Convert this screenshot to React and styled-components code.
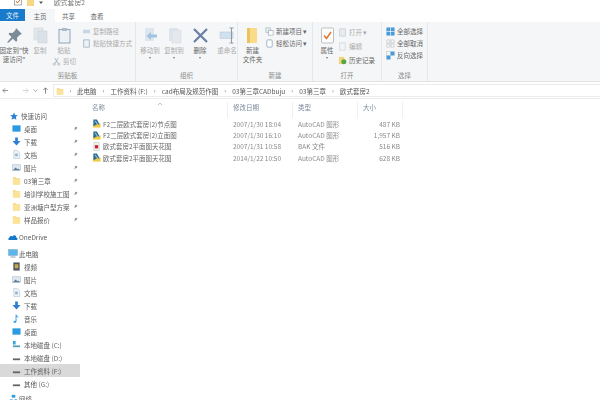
import React from 'react';
import styled, {createGlobalStyle} from 'styled-components';

const GlobalStyle = createGlobalStyle`
	html, body {
		margin: 0;
		padding: 0;
		background: #fff;
	}
	body {
		width: 600px;
		height: 400px;
		overflow: hidden;
		font-family: "Noto Sans CJK SC", "Noto Sans", sans-serif;
		font-size: 6.5px;
		color: #555;
	}
`;

const Win = styled.div`
	width: 600px;
	height: 400px;
	overflow: hidden;
	display: flex;
	flex-direction: column;
	filter: blur(0.4px);
`;

const TitleBar = styled.div`
	height: 9px;
	display: flex;
	align-items: flex-start;
	padding-left: 14px;
	gap: 5px;
	overflow: hidden;
	svg { flex: none; }
`;
const TitleText = styled.span`
	margin: -2px 0 0 6px;
	font-size: 6.8px;
	line-height: 9px;
	color: #777;
`;

const Tabs = styled.div`
	height: 13px;
	display: flex;
	align-items: stretch;
`;
const FileTab = styled.div`
	width: 25px;
	height: 12px;
	background: #1979ca;
	color: #e8f2fb;
	display: flex;
	align-items: center;
	justify-content: center;
`;
const Tab = styled.div`
	width: ${p => p.$w}px;
	background: ${p => (p.$active ? '#f5f6f7' : '#fff')};
	color: #666;
	display: flex;
	align-items: center;
	justify-content: center;
`;

const Ribbon = styled.div`
	height: 59px;
	background: #f5f6f7;
	border-bottom: 1px solid #e3e3e3;
	display: flex;
`;
const Group = styled.div`
	width: ${p => p.$w}px;
	flex: none;
	border-right: 1px solid #e6e7e8;
	display: flex;
	flex-direction: column;
	box-sizing: border-box;
`;
const GroupBody = styled.div`
	height: 49px;
	display: flex;
	padding-left: ${p => p.$pad || 0}px;
`;
const GroupLabel = styled.div`
	height: 10px;
	line-height: 9px;
	text-align: center;
	color: #8c8c8c;
`;
const BigButton = styled.div`
	width: ${p => p.$w}px;
	flex: none;
	display: flex;
	flex-direction: column;
	align-items: center;
	padding-top: 5px;
	line-height: 9px;
	text-align: center;
	white-space: nowrap;
	color: ${p => (p.$on ? '#666' : '#aaa')};
	svg { height: 17px; margin-bottom: 2px; }
`;
const Caret = styled.span`
	width: 0;
	height: 0;
	margin-top: 2px;
	border-left: 1.5px solid transparent;
	border-right: 1.5px solid transparent;
	border-top: 2px solid #777;
`;
const SmallColumn = styled.div`
	display: flex;
	flex-direction: column;
	padding-top: ${p => p.$top || 5}px;
	padding-left: ${p => p.$left || 0}px;
	gap: ${p => p.$gap || 3}px;
`;
const SmallButton = styled.div`
	height: 9px;
	display: flex;
	align-items: center;
	gap: 2px;
	white-space: nowrap;
	line-height: 9px;
	color: ${p => (p.$on ? '#666' : '#aaa')};
	svg { flex: none; height: 9px; margin: 0; }
`;
const Gap = styled.div`
	width: ${p => p.$w}px;
	flex: none;
`;
const CutRow = styled(SmallButton)`
	margin-top: 2px;
`;

const AddressRow = styled.div`
	height: 15px;
	margin-top: 1px;
	display: flex;
	align-items: center;
	border-bottom: 1px solid #ececec;
`;
const NavIcons = styled.div`
	width: 53px;
	flex: none;
	padding-left: 2px;
	box-sizing: border-box;
	display: flex;
	align-items: center;
	gap: 4px;
`;
const AddressBox = styled.div`
	flex: 1;
	height: 13px;
	border: 1px solid #ececec;
	border-right: none;
	box-sizing: border-box;
	display: flex;
	align-items: center;
	padding-left: 2px;
	color: #555;
	white-space: nowrap;
`;
const Chevron = styled.span`
	width: ${p => p.$w}px;
	flex: none;
	text-align: center;
	font-size: 6px;
	color: #777;
`;

const Main = styled.div`
	flex: 1;
	display: flex;
	min-height: 0;
`;
const Sidebar = styled.div`
	width: 80px;
	flex: none;
	padding-top: 10px;
	display: flex;
	flex-direction: column;
`;
const NavRow = styled.div`
	height: 13px;
	flex: none;
	display: flex;
	align-items: center;
	gap: ${p => p.$gap || 3}px;
	padding-left: ${p => p.$indent}px;
	margin-top: ${p => p.$space || 0}px;
	background: ${p => (p.$selected ? '#d9d9d9' : 'transparent')};
	white-space: nowrap;
	color: #5a5a5a;
	svg { flex: none; }
`;
const Pin = styled.span`
	position: absolute;
	left: 73px;
	color: #999;
	display: flex;
`;

const Content = styled.div`
	flex: 1;
	padding-top: 3px;
`;
const HeaderRow = styled.div`
	height: 16px;
	display: flex;
	padding-left: 7px;
	color: #7d8b9c;
`;
const ListRow = styled.div`
	height: 11.4px;
	display: flex;
	align-items: center;
	padding-left: 12px;
	color: #666;
	white-space: nowrap;
`;
const NameCell = styled.div`
	width: 136px;
	flex: none;
	display: flex;
	align-items: center;
	gap: 2px;
`;
const Cell = styled.div`
	width: ${p => p.$w}px;
	flex: none;
	box-sizing: border-box;
	padding-left: 5px;
	color: #8b8b8b;
	text-align: ${p => (p.$right ? 'right' : 'left')};
	padding-right: ${p => (p.$right ? 3 : 0)}px;
`;
const HeadCell = styled.div`
	width: ${p => p.$w}px;
	flex: none;
	box-sizing: border-box;
	padding-left: ${p => p.$pad ?? 5}px;
	height: 16px;
	line-height: 11px;
	border-right: 1px solid #efefef;
	position: relative;
`;
const SortMark = styled.svg`
	position: absolute;
	left: 70px;
	top: 0;
`;

const Folder = ({s = 9}) => (
	<svg width={s} height={s} viewBox="0 0 10 10">
		<path d="M1 1.500h3l1 1h4v7H1z" fill="#f6d67c" />
		<path d="M1 3h8v6.500H1z" fill="#fbe39a" />
	</svg>
);
const Drive = ({c = '#666'}) => (
	<svg width="9" height="9" viewBox="0 0 10 10">
		<rect x="1" y="6" width="8" height="2" fill={c} />
	</svg>
);
const SysDrive = () => (
	<svg width="9" height="9" viewBox="0 0 10 10">
		<rect x="1" y="1" width="3" height="4" fill="#35a7dc" />
		<rect x="1" y="6" width="8" height="2" fill="#5a9fb8" />
	</svg>
);
const Desktop = () => (
	<svg width="9" height="9" viewBox="0 0 10 10">
		<rect x="0.500" y="1.500" width="9" height="7" fill="#2a9be2" />
	</svg>
);
const Down = () => (
	<svg width="9" height="9" viewBox="0 0 10 10">
		<path d="M3.500 0.500h3v4h3L5 9.500 0.500 4.500h3z" fill="#2f7fd1" />
	</svg>
);
const Doc = () => (
	<svg width="9" height="9" viewBox="0 0 10 10">
		<path d="M2 .5h4l2.500 2.500v6.500H2z" fill="#eef3f8" stroke="#a9bccd" strokeWidth=".6" />
		<rect x="3.500" y="4" width="3" height="3" fill="#8fb6d8" />
	</svg>
);
const Pic = () => (
	<svg width="9" height="9" viewBox="0 0 10 10">
		<rect x=".5" y="2" width="9" height="6.500" fill="#dfe8f0" stroke="#9db0c0" strokeWidth=".5" />
		<path d="M1 8l3-3 2 2 1-1 2 2z" fill="#5b7d98" />
	</svg>
);
const Video = () => (
	<svg width="9" height="9" viewBox="0 0 10 10">
		<rect x="1.500" y=".5" width="7" height="9" fill="#4a5560" />
		<rect x="3" y="2.500" width="4" height="4.500" fill="#c9a94a" />
	</svg>
);
const Music = () => (
	<svg width="9" height="9" viewBox="0 0 10 10">
		<path d="M4 .5l.8 0c.3 1.500 2.500 2 2.500 4-.5-.8-1.300-1.300-2.300-1.500V8c0 1.200-1 1.800-2 1.800S1.300 9 1.800 8.200C2.300 7.400 3.300 7.200 4 7.500z" fill="#2a9be2" />
	</svg>
);
const Star = () => (
	<svg width="8" height="8" viewBox="0 0 10 10">
		<path d="M5 .5l1.400 3.100 3.400.4-2.500 2.300.7 3.300L5 8l-3 1.600.7-3.300L.2 4l3.400-.4z" fill="#2e83d6" />
	</svg>
);
const Cloud = () => (
	<svg width="10" height="8" viewBox="0 0 10 8">
		<path d="M1 7C0 7 0 5 1.300 4.800 1.500 3 3.500 2.500 4.500 3.500 5.500 1.500 8.300 2 8.300 4.500 10 4.700 10 7 8.500 7z" fill="#1578c8" />
	</svg>
);
const PC = () => (
	<svg width="10" height="9" viewBox="0 0 10 9">
		<rect x=".5" y=".5" width="9" height="6" fill="#5ab6ea" stroke="#7a97ad" strokeWidth=".4" />
		<rect x="2.500" y="7.500" width="5" height="1" fill="#89a3b8" />
	</svg>
);
const Net = () => (
	<svg width="9" height="9" viewBox="0 0 10 10">
		<rect x="3" y="1" width="4" height="3" fill="#2a9be2" />
		<rect x="1" y="6" width="3" height="3" fill="#2a9be2" />
		<rect x="6" y="6" width="3" height="3" fill="#2a9be2" />
	</svg>
);
const PinIcon = () => (
	<svg width="5" height="5" viewBox="0 0 6 6">
		<path d="M3.500.5l2 2-1 .5-1 1.200-.4-.4L1 5.500l1.500-2.300-.7-.7L3 1.500z" fill="#8a8a8a" />
	</svg>
);
const CadFile = () => (
	<svg width="9" height="9" viewBox="0 0 10 10">
		<rect x="1" y="5" width="8.500" height="4.500" fill="#f3cb3f" />
		<path d="M1.500.5h4l3 5.500H5L3 7.500H1.500z" fill="#2d6f97" />
		<path d="M3.500 2l3 4.500" stroke="#e7f1f8" strokeWidth=".8" />
	</svg>
);
const BakFile = () => (
	<svg width="9" height="9" viewBox="0 0 10 10">
		<path d="M2 .5h6v9H2z" fill="#f1f1f1" stroke="#b5b5b5" strokeWidth=".5" />
		<rect x="3.200" y="3.500" width="3.600" height="3.600" fill="#cc1f2c" />
	</svg>
);

const PinBig = () => (
	<svg viewBox="0 0 17 17" width="17">
		<path d="M10 1l6 6-2 .8-3 3 .3 3-1.300 1-3-3L2 16l-.8-.8L5.500 10l-3-3 1-1.300 3 .3 3-3z" fill="#7d8a98" />
	</svg>
);
const CopyBig = () => (
	<svg viewBox="0 0 17 17" width="17">
		<rect x="2" y="1" width="9" height="12" fill="#e3e7ec" stroke="#d0d6dd" strokeWidth=".6" />
		<rect x="6" y="4" width="9" height="12" fill="#dbe1e8" stroke="#cbd2da" strokeWidth=".6" />
	</svg>
);
const PasteBig = () => (
	<svg viewBox="0 0 17 17" width="17">
		<rect x="3" y="2.500" width="11" height="13.500" fill="#eef1f4" stroke="#8ea6bb" strokeWidth="1" />
		<rect x="6" y="1" width="5" height="3" fill="#a9bccd" />
	</svg>
);
const MoveBig = ({copy}) => (
	<svg viewBox="0 0 17 17" width="17">
		<rect x="3" y="1" width="9" height="13" fill="#dde5ee" />
		{copy ? <rect x="6" y="3" width="9" height="13" fill="#e5e9ee" stroke="#d1d8df" strokeWidth=".5" /> : <path d="M15 7.500v3H9V13L4.500 9 9 5v2.500z" fill="#a3c3e2" />}
	</svg>
);
const DeleteBig = () => (
	<svg viewBox="0 0 17 17" width="17">
		<path d="M2 2l13 13M15 2L2 15" stroke="#6a7fa3" strokeWidth="2.200" />
	</svg>
);
const RenameBig = () => (
	<svg viewBox="0 0 17 17" width="17">
		<rect x="1" y="5" width="13" height="6.500" fill="#cfe0ef" stroke="#b4c4d2" strokeWidth=".5" />
		<path d="M12.500 1v15M10.500 1h4M10.500 16h4" stroke="#8d99a5" strokeWidth="1" fill="none" />
	</svg>
);
const FolderBig = () => (
	<svg viewBox="0 0 17 17" width="17">
		<rect x="3" y="1" width="10" height="15" fill="#f8dc8a" />
		<rect x="3" y="1" width="3" height="15" fill="#eec25a" />
	</svg>
);
const PropsBig = () => (
	<svg viewBox="0 0 17 17" width="17">
		<rect x="2.500" y="1" width="12" height="15" rx="1" fill="#fdfdfd" stroke="#b1b1b1" strokeWidth=".8" />
		<path d="M5 8.500l2.500 3L12 5" stroke="#e0782f" strokeWidth="1.500" fill="none" />
	</svg>
);
const Mini = ({children}) => (
	<svg width="9" height="9" viewBox="0 0 10 10">
		{children}
	</svg>
);
const Arrow = ({flip, c = '#777'}) => (
	<svg width="7" height="7" viewBox="0 0 8 8">
		<path d={flip ? 'M1 4h6M4.500 1.500L7 4 4.500 6.500' : 'M7 4H1M3.500 1.500L1 4l2.500 2.500'} stroke={c} strokeWidth=".9" fill="none" />
	</svg>
);
const Up = () => (
	<svg width="7" height="7" viewBox="0 0 8 8">
		<path d="M4 7.500V1M1.500 3.500L4 1l2.500 2.500" stroke="#666" strokeWidth=".9" fill="none" />
	</svg>
);

const quick = [
	[<Desktop />, '桌面'],
	[<Down />, '下载'],
	[<Doc />, '文档'],
	[<Pic />, '图片'],
	[<Folder />, '03第三章'],
	[<Folder />, '培训学校施工图'],
	[<Folder />, '亚洲塘户型方案'],
	[<Folder />, '样品报价'],
];
const pc = [
	[<Video />, '视频'],
	[<Pic />, '图片'],
	[<Doc />, '文档'],
	[<Down />, '下载'],
	[<Music />, '音乐'],
	[<Desktop />, '桌面'],
	[<SysDrive />, '本地磁盘 (C:)'],
	[<Drive />, '本地磁盘 (D:)'],
	[<Drive />, '工作资料 (F:)', true],
	[<Drive />, '其他 (G:)'],
];
const files = [
	[<CadFile />, 'F2二层欧式套房(2)节点图', '2007/1/30 18:04', 'AutoCAD 图形', '487 KB'],
	[<CadFile />, 'F2二层欧式套房(2)立面图', '2007/1/30 16:10', 'AutoCAD 图形', '1,957 KB'],
	[<BakFile />, '欧式套房2平面图天花图', '2007/1/31 10:58', 'BAK 文件', '516 KB'],
	[<CadFile />, '欧式套房2平面图天花图', '2014/1/22 10:50', 'AutoCAD 图形', '628 KB'],
];
const crumbs = ['此电脑', '工作资料 (F:)', 'cad布局及规范作图', '03第三章CADbuju', '03第三章', '欧式套房2'];

const App = () => (
	<Win>
		<GlobalStyle />
		<TitleBar>
			<svg width="8" height="6" viewBox="0 0 8 6"><rect x=".5" y="-3" width="7" height="8" fill="#fff" stroke="#888" strokeWidth=".7" /><path d="M2 1l1.500 2L6 0" stroke="#d0702c" fill="none" /></svg>
			<svg width="7" height="6" viewBox="0 0 7 6"><rect width="7" height="6" fill="#f7d77f" /></svg>
			<svg width="4" height="6" viewBox="0 0 4 6"><path d="M0 1.500h4L2 4z" fill="#555" /></svg>
			<TitleText>欧式套房2</TitleText>
		</TitleBar>
		<Tabs>
			<FileTab>文件</FileTab>
			<Tab $w={30} $active>主页</Tab>
			<Tab $w={27}>共享</Tab>
			<Tab $w={30}>查看</Tab>
		</Tabs>
		<Ribbon>
			<Group $w={136}>
				<GroupBody>
					<BigButton $w={28} $on><PinBig />固定到"快<br />速访问"</BigButton>
					<BigButton $w={24}><CopyBig />复制</BigButton>
					<BigButton $w={24}>
						<PasteBig />粘贴
						<CutRow>
							<Mini><path d="M3 1l3.500 6M7 1L3.500 7" stroke="#8b99a6" strokeWidth=".7" /><circle cx="2.500" cy="8" r="1.200" fill="none" stroke="#8b99a6" strokeWidth=".6" /><circle cx="7.500" cy="8" r="1.200" fill="none" stroke="#8b99a6" strokeWidth=".6" /></Mini>
							剪切
						</CutRow>
					</BigButton>
					<SmallColumn $left={6} $gap={3}>
						<SmallButton><Mini><rect x="1" y="3" width="8" height="4" fill="#c9d6e2" /></Mini>复制路径</SmallButton>
						<SmallButton><Mini><rect x="2" y="1" width="6" height="8" fill="#eef2f6" stroke="#7f9ab3" strokeWidth=".7" /></Mini>粘贴快捷方式</SmallButton>
					</SmallColumn>
				</GroupBody>
				<GroupLabel>剪贴板</GroupLabel>
			</Group>
			<Group $w={102}>
				<GroupBody $pad={2}>
					<BigButton $w={24}><MoveBig />移动到<Caret /></BigButton>
					<BigButton $w={24}><MoveBig copy />复制到<Caret /></BigButton>
					<Gap $w={3} />
					<BigButton $w={22} $on><DeleteBig />删除<Caret /></BigButton>
					<BigButton $w={32}><RenameBig />重命名</BigButton>
				</GroupBody>
				<GroupLabel>组织</GroupLabel>
			</Group>
			<Group $w={75}>
				<GroupBody $pad={2}>
					<BigButton $w={25} $on><FolderBig />新建<br />文件夹</BigButton>
					<SmallColumn $gap={3}>
						<SmallButton $on><Mini><rect x="1" y="1" width="5" height="5" fill="#e8eef4" stroke="#8aa" strokeWidth=".6" /><rect x="4" y="4" width="5" height="5" fill="#fff" stroke="#89a" strokeWidth=".6" /></Mini>新建项目 ▾</SmallButton>
						<SmallButton $on><Mini><rect x="2" y="1" width="6" height="8" rx="1" fill="#fff" stroke="#6f8fae" strokeWidth=".7" /></Mini>轻松访问 ▾</SmallButton>
					</SmallColumn>
				</GroupBody>
				<GroupLabel>新建</GroupLabel>
			</Group>
			<Group $w={69}>
				<GroupBody $pad={3}>
					<BigButton $w={22} $on><PropsBig />属性<Caret /></BigButton>
					<SmallColumn $top={6} $gap={5}>
						<SmallButton><Mini><rect x="2" y="1" width="6" height="8" fill="#e8ecf0" stroke="#b0bac4" strokeWidth=".6" /></Mini>打开 ▾</SmallButton>
						<SmallButton><Mini><rect x="2" y="1" width="6" height="8" fill="#f2f5f8" stroke="#b9c7d4" strokeWidth=".6" /></Mini>编辑</SmallButton>
						<SmallButton $on><Mini><rect x="1" y="1" width="6" height="8" fill="#f3d47a" /><circle cx="6.500" cy="6.500" r="2.800" fill="#5aa544" /></Mini>历史记录</SmallButton>
					</SmallColumn>
				</GroupBody>
				<GroupLabel>打开</GroupLabel>
			</Group>
			<Group $w={46}>
				<GroupBody $pad={4}>
					<SmallColumn $gap={3}>
						<SmallButton $on><Mini><path d="M.5.500h9v9h-9z" fill="#4a9ad8" /><path d="M5 .5v9M.5 5h9" stroke="#fff" strokeWidth=".7" /></Mini>全部选择</SmallButton>
						<SmallButton $on><Mini><path d="M1 1h3.500v3.500H1zM5.500 1H9v3.500H5.500zM1 5.500h3.500V9H1zM5.500 5.500H9V9H5.500z" fill="none" stroke="#bbb" strokeWidth=".6" /></Mini>全部取消</SmallButton>
						<SmallButton $on><Mini><path d="M5 .5h4.500V5H5zM.5 5H5v4.500H.5z" fill="#4a9ad8" /><path d="M.5.5H5V5H.5z" fill="none" stroke="#9bb" strokeWidth=".5" /></Mini>反向选择</SmallButton>
					</SmallColumn>
				</GroupBody>
				<GroupLabel>选择</GroupLabel>
			</Group>
		</Ribbon>
		<AddressRow>
			<NavIcons>
				<Arrow />
				<Gap $w={5} />
				<Arrow flip c="#ccc" />
				<svg width="5" height="5" viewBox="0 0 5 5"><path d="M.5 1.500l2 2 2-2" stroke="#888" fill="none" strokeWidth=".7" /></svg>
				<Up />
			</NavIcons>
			<AddressBox>
				<Folder s={8} />
				{crumbs.map((label, i) => (
					<React.Fragment key={label}>
						<Chevron $w={i === 0 ? 13 : 14}>›</Chevron>
						{label}
					</React.Fragment>
				))}
			</AddressBox>
		</AddressRow>
		<Main>
			<Sidebar>
				<NavRow $indent={10}><Star />快速访问</NavRow>
				{quick.map(([icon, label]) => (
					<NavRow $indent={12} key={label}>{icon}{label}<Pin><PinIcon /></Pin></NavRow>
				))}
				<NavRow $indent={8} $gap={1} $space={4}><Cloud />OneDrive</NavRow>
				<NavRow $indent={8} $gap={1} $space={4}><PC />此电脑</NavRow>
				{pc.map(([icon, label, selected]) => (
					<NavRow $indent={12} key={label} $selected={selected}>{icon}{label}</NavRow>
				))}
				<NavRow $indent={9} $gap={1} $space={2}><Net />网络</NavRow>
			</Sidebar>
			<Content>
				<HeaderRow>
					<HeadCell $w={141}>
						名称
						<SortMark width="6" height="4" viewBox="0 0 6 4"><path d="M1 3l2-2 2 2" stroke="#999" strokeWidth=".6" fill="none" /></SortMark>
					</HeadCell>
					<HeadCell $w={65}>修改日期</HeadCell>
					<HeadCell $w={65}>类型</HeadCell>
					<HeadCell $w={45}>大小</HeadCell>
				</HeaderRow>
				{files.map(([icon, name, date, type, size]) => (
					<ListRow key={date}>
						<NameCell>{icon}{name}</NameCell>
						<Cell $w={65}>{date}</Cell>
						<Cell $w={65}>{type}</Cell>
						<Cell $w={45} $right>{size}</Cell>
					</ListRow>
				))}
			</Content>
		</Main>
	</Win>
);

export default App;
